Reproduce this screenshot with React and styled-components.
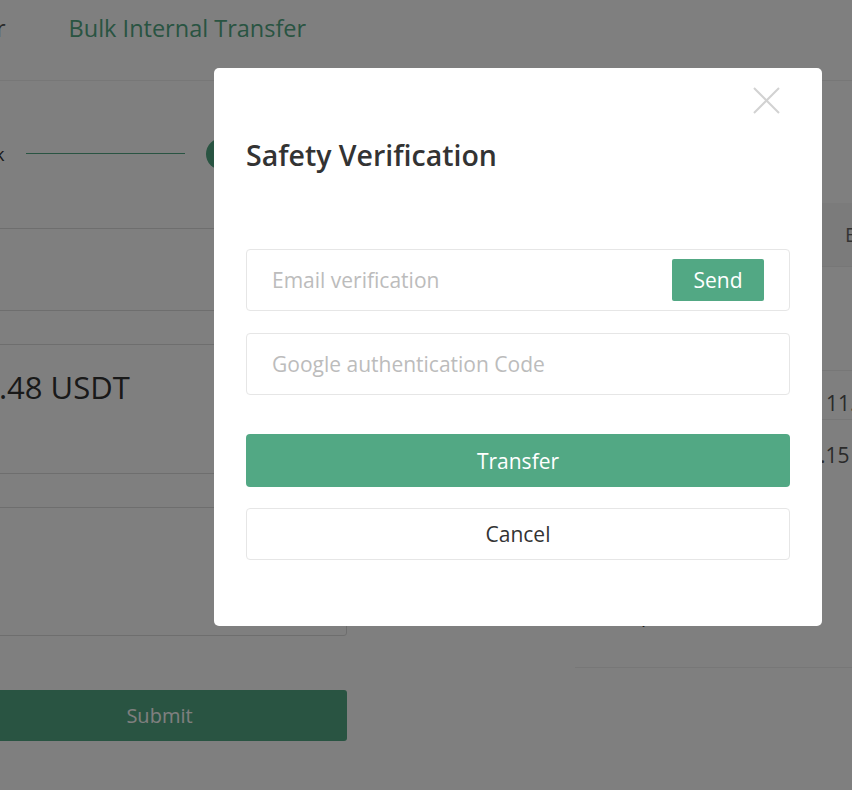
import React from 'react';
import styled, { createGlobalStyle } from 'styled-components';

const GlobalStyle = createGlobalStyle`
  html, body {
    margin: 0;
    padding: 0;
    background: #fff;
    overflow: hidden;
  }
  body {
    font-family: "Open Sans", "Noto Sans", Arial, sans-serif;
    color: #333;
  }
  * {
    box-sizing: border-box;
  }
`;

const Page = styled.div`
  width: 852px;
  height: 790px;
  overflow: hidden;
  background: #fff;
`;

const Content = styled.div`
  margin-left: -170px;
  width: 1400px;
`;

const TabBar = styled.div`
  height: 81px;
  margin-left: -8px;
  padding-top: 11px;
  display: flex;
  gap: 63px;
  border-bottom: 1px solid #eee;
`;

const Tab = styled.span`
  font-size: 23.5px;
  line-height: 34px;
  color: ${props => props.$active ? '#52a884' : '#555'};
`;

const Main = styled.div`
  display: flex;
  gap: 228px;
`;

const LeftCol = styled.div`
  width: 517px;
  flex-shrink: 0;
  display: flex;
  flex-direction: column;
`;

const StepRow = styled.div`
  height: 147px;
  display: flex;
  align-items: center;
  padding: 0 0 2px 80px;
`;

const StepLabel = styled.span`
  font-size: 18px;
  color: #333;
  margin-left: 12px;
  white-space: nowrap;
`;

const StepDot = styled.span`
  width: 32px;
  height: 32px;
  border-radius: 50%;
  background: #52a884;
  color: #fff;
  display: flex;
  align-items: center;
  justify-content: center;
  font-size: 16px;
  flex-shrink: 0;
`;

const StepLine = styled.span`
  width: 159px;
  height: 1px;
  background: #52a884;
  margin: 0 21px;
  flex-shrink: 0;
`;

const FieldBox = styled.div`
  height: ${props => props.$h}px;
  border: 1px solid #ddd;
  border-radius: 3px;
  margin-bottom: 33px;
  display: flex;
  align-items: flex-start;
  padding: 21px 0 0 89px;
  font-size: 31px;
  color: #333;
  white-space: nowrap;
`;

const SubmitButton = styled.button`
  margin-top: 21px;
  height: 51px;
  border: none;
  border-radius: 3px;
  background: #52a884;
  color: #fff;
  font-family: inherit;
  font-size: 20px;
  padding-left: 148px;
`;

const RightCol = styled.div`
  width: 500px;
  flex-shrink: 0;
  padding-top: 122px;
  display: flex;
  flex-direction: column;
`;

const TableHead = styled.div`
  height: 63px;
  background: #f6f6f6;
  display: flex;
  align-items: center;
  padding-left: 270px;
  font-size: 20px;
  color: #666;
  white-space: nowrap;
`;

const TableRow = styled.div`
  height: ${props => props.$h}px;
  border-top: 1px solid #eee;
  display: flex;
  align-items: flex-start;
  padding: ${props => props.$pt || 0}px 0 0 ${props => props.$pl || 251}px;
  font-size: 21px;
  color: #555;
`;

const NoteRow = styled.div`
  height: 89px;
  padding: 22px 0 0 50px;
  font-size: 20px;
  line-height: 28px;
  color: #333;
  border-bottom: 1px solid #eee;
`;

const Overlay = styled.div`
  position: fixed;
  inset: 0;
  background: rgba(0, 0, 0, 0.5);
  padding: 68px 0 0 214px;
`;

const Modal = styled.div`
  width: 608px;
  height: 558px;
  background: #fff;
  border-radius: 5px;
  padding: 19px 32px 0;
  display: flex;
  flex-direction: column;
`;

const CloseRow = styled.div`
  display: flex;
  justify-content: flex-end;
  padding-right: 10px;
  height: 27px;
`;

const CloseButton = styled.button`
  width: 27px;
  height: 27px;
  padding: 0;
  border: none;
  background: none;
  display: flex;
`;

const Title = styled.h2`
  margin: 22px 0 0;
  font-size: 28.5px;
  line-height: 38px;
  font-weight: 600;
  color: #333;
`;

const InputWrap = styled.div`
  height: 62px;
  margin-top: ${props => props.$mt}px;
  border: 1px solid #e6e6e6;
  border-radius: 4px;
  display: flex;
  align-items: center;
  padding: 0 25px;
`;

const Input = styled.input`
  flex: 1;
  min-width: 0;
  border: none;
  outline: none;
  font-family: inherit;
  font-size: 21px;
  color: #333;
  background: transparent;
  padding: 0;

  &::placeholder {
    color: #bcbcbc;
  }
`;

const SendButton = styled.button`
  width: 92px;
  height: 42px;
  border: none;
  border-radius: 2px;
  background: #52a884;
  color: #fff;
  font-family: inherit;
  font-size: 21px;
  padding: 0;
`;

const ActionButton = styled.button`
  height: ${props => props.$h}px;
  margin-top: ${props => props.$mt}px;
  border-radius: 4px;
  border: ${props => props.$primary ? 'none' : '1px solid #e6e6e6'};
  background: ${props => props.$primary ? '#52a884' : '#fff'};
  color: ${props => props.$primary ? '#fff' : '#333'};
  font-family: inherit;
  font-size: 21px;
  padding: 0;
`;

function CloseIcon() {
  return (
    <svg width="27" height="27" viewBox="0 0 27 27">
      <path d="M1 1 L26 26 M26 1 L1 26" stroke="#d2d2d2" strokeWidth="2" fill="none" />
    </svg>
  );
}

export default function App() {
  return (
    <>
      <GlobalStyle />
      <Page>
        <Content>
          <TabBar>
            <Tab>Internal Transfer</Tab>
            <Tab $active>Bulk Internal Transfer</Tab>
          </TabBar>
          <Main>
            <LeftCol>
              <StepRow>
                <StepDot>1</StepDot>
                <StepLabel>Check</StepLabel>
                <StepLine />
                <StepDot>2</StepDot>
                <StepLabel>Confirm</StepLabel>
              </StepRow>
              <FieldBox $h={83} />
              <FieldBox $h={130}>1,234.48 USDT</FieldBox>
              <FieldBox $h={129} />
              <SubmitButton>Submit</SubmitButton>
            </LeftCol>
            <RightCol>
              <TableHead>Est. Fee</TableHead>
              <TableRow $h={104} />
              <TableRow $h={49} $pt={18}>11.00</TableRow>
              <TableRow $h={160} $pt={21} $pl={233}>0.15</TableRow>
              <NoteRow>Tips</NoteRow>
            </RightCol>
          </Main>
        </Content>
      </Page>
      <Overlay>
        <Modal>
          <CloseRow>
            <CloseButton aria-label="Close">
              <CloseIcon />
            </CloseButton>
          </CloseRow>
          <Title>Safety Verification</Title>
          <InputWrap $mt={75}>
            <Input placeholder="Email verification" />
            <SendButton>Send</SendButton>
          </InputWrap>
          <InputWrap $mt={22}>
            <Input placeholder="Google authentication Code" />
          </InputWrap>
          <ActionButton $primary $h={53} $mt={39}>Transfer</ActionButton>
          <ActionButton $h={52} $mt={21}>Cancel</ActionButton>
        </Modal>
      </Overlay>
    </>
  );
}
